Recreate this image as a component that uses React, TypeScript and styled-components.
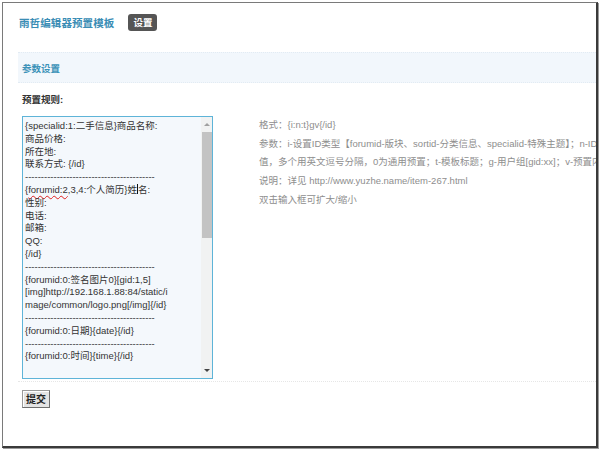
import styled, { createGlobalStyle } from 'styled-components';

const GlobalStyle = createGlobalStyle`
  html, body {
    margin: 0;
    padding: 0;
    background: #fff;
  }
  body {
    font-family: "Liberation Sans", "Noto Sans CJK SC", sans-serif;
    color: #333;
  }
  #root {
    padding: 2px;
  }
`;

const SFrame = styled.div`
  box-sizing: border-box;
  width: 596px;
  height: 446px;
  border-top: 1px solid #7a7a7a;
  border-left: 1px solid #7a7a7a;
  border-right: 2px solid #3a3a3a;
  border-bottom: 2px solid #3a3a3a;
  box-shadow: 1px 1px 0 #9a9a9a;
  padding: 9px 0 0 15px;
  overflow: hidden;
  display: flex;
  flex-direction: column;
`;

const SHeader = styled.div`
  display: flex;
  align-items: center;
  height: 20px;
  padding-left: 1px;
`;

const STitle = styled.h1`
  margin: 0;
  font-size: 10.5px;
  font-weight: bold;
  color: #3a8db5;
  letter-spacing: 0.1px;
`;

const SBadge = styled.span`
  margin-left: 14px;
  padding: 0 5px;
  height: 17px;
  line-height: 17px;
  border-radius: 3px;
  background: #555;
  color: #fff;
  font-size: 9.5px;
  font-weight: bold;
`;

const SSectionBar = styled.div`
  margin-top: 20px;
  height: 29px;
  display: flex;
  align-items: center;
  padding-left: 4px;
  background: #f2f7fc;
  border-top: 1px dotted #e2ebf3;
  border-bottom: 1px dotted #e2ebf3;
  font-size: 9.5px;
  font-weight: bold;
  color: #3b92b8;
`;

const SLabel = styled.div`
  margin-top: 9px;
  padding-left: 4px;
  height: 16px;
  line-height: 16px;
  font-size: 9.5px;
  font-weight: bold;
  color: #333;
`;

const SRow = styled.div`
  display: flex;
  align-items: flex-start;
  margin-top: 8px;
  padding-left: 4px;
`;

const SEditor = styled.div`
  position: relative;
  box-sizing: border-box;
  width: 191px;
  height: 263px;
  border: 1px solid #5eb4d8;
  background: #f4f8fc;
  overflow: hidden;
  flex-shrink: 0;
`;

const SEditorText = styled.div`
  padding: 3px 14px 0 2px;
  font-size: 9.5px;
  line-height: 12.8px;
  color: #333;
  white-space: nowrap;
`;

const SMisspelled = styled.span`
  text-decoration: underline wavy #e02020;
  text-decoration-thickness: 1px;
  text-underline-offset: 2px;
`;

const SCaret = styled.span`
  display: inline-block;
  width: 0;
  height: 10px;
  border-left: 1px solid #111;
  vertical-align: -1px;
`;

const SScrollbar = styled.div`
  position: absolute;
  top: 0;
  right: 0;
  bottom: 0;
  width: 11px;
  background: #f1f2f2;
  display: flex;
  flex-direction: column;
  align-items: center;
`;

const SArrow = styled.div<{ $dir: 'up' | 'down'; $color: string }>`
  height: 15px;
  display: flex;
  align-items: center;
  justify-content: center;
  &::after {
    content: '';
    border-left: 3px solid transparent;
    border-right: 3px solid transparent;
    ${({ $dir, $color }) =>
      $dir === 'up'
        ? `border-bottom: 3px solid ${$color};`
        : `border-top: 3px solid ${$color};`}
  }
`;

const SThumb = styled.div`
  width: 10px;
  height: 106px;
  background: #c3c3c3;
`;

const SFill = styled.div`
  flex: 1;
`;

const SHelp = styled.div`
  margin-left: 46px;
  font-size: 9.5px;
  line-height: 18.7px;
  color: #8e8e8e;
  white-space: nowrap;
`;

const SDivider = styled.div`
  margin-top: 2px;
  border-top: 1px dotted #e6e6e6;
`;

const SActions = styled.div`
  margin-top: 7px;
  padding-left: 4px;
`;

const SSubmit = styled.button`
  box-sizing: border-box;
  height: 18px;
  padding: 0 3px;
  background: #e4e4e4;
  border: 1px solid #9a9a9a;
  border-right-color: #6e6e6e;
  border-bottom-color: #6e6e6e;
  box-shadow: inset 1px 1px 0 #fff;
  font-family: "Liberation Sans", "Noto Sans CJK SC", sans-serif;
  font-size: 10px;
  font-weight: bold;
  color: #222;
`;

const dashes = '-'.repeat(41);

const App = () => {
  return (
    <>
      <GlobalStyle />
      <SFrame>
        <SHeader>
          <STitle>雨哲编辑器预置模板</STitle>
          <SBadge>设置</SBadge>
        </SHeader>

        <SSectionBar>参数设置</SSectionBar>
        <SLabel>预置规则:</SLabel>

        <SRow>
          <SEditor>
            <SEditorText>
              <div>{'{specialid:1:二手信息}商品名称:'}</div>
              <div>商品价格:</div>
              <div>所在地:</div>
              <div>{'联系方式: {/id}'}</div>
              <div>{dashes}</div>
              <div>
                {'{'}
                <SMisspelled>forumid:2</SMisspelled>
                {',3,4:个人简历}姓'}
                <SCaret />
                名:
              </div>
              <div>性别:</div>
              <div>电话:</div>
              <div>邮箱:</div>
              <div>QQ:</div>
              <div>{'{/id}'}</div>
              <div>{dashes}</div>
              <div>{'{forumid:0:签名图片0}[gid:1,5]'}</div>
              <div>[img]http://192.168.1.88:84/static/i</div>
              <div>{'mage/common/logo.png[/img]{/id}'}</div>
              <div>{dashes}</div>
              <div>{'{forumid:0:日期}{date}{/id}'}</div>
              <div>{dashes}</div>
              <div>{'{forumid:0:时间}{time}{/id}'}</div>
            </SEditorText>
            <SScrollbar>
              <SArrow $dir="up" $color="#a0a0a0" />
              <SThumb />
              <SFill />
              <SArrow $dir="down" $color="#444" />
            </SScrollbar>
          </SEditor>

          <SHelp>
            <div>{'格式：{i:n:t}gv{/id}'}</div>
            <div>参数：i-设置ID类型【forumid-版块、sortid-分类信息、specialid-特殊主题】；n-ID</div>
            <div>值，多个用英文逗号分隔，0为通用预置；t-模板标题；g-用户组[gid:xx]；v-预置内容</div>
            <div>说明：详见 http://www.yuzhe.name/item-267.html</div>
            <div>双击输入框可扩大/缩小</div>
          </SHelp>
        </SRow>

        <SDivider />

        <SActions>
          <SSubmit>提交</SSubmit>
        </SActions>
      </SFrame>
    </>
  );
};

export default App;
